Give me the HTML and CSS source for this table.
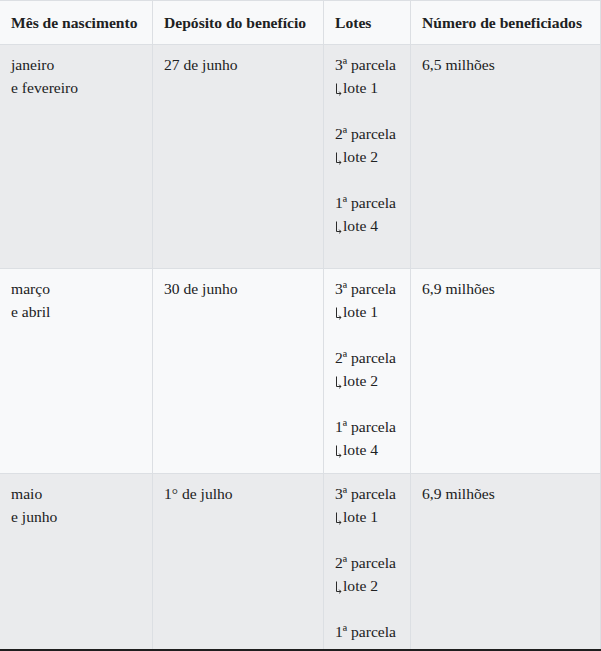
FILE: index.html
```html
<!DOCTYPE html>
<html lang="pt-BR">
<head>
<meta charset="utf-8">
<title>Calendário</title>
<link rel="stylesheet" href="styles.css">
</head>
<body>
<div class="frame">
<table class="calendar">
  <colgroup>
    <col class="c1"><col class="c2"><col class="c3"><col class="c4">
  </colgroup>
  <thead>
    <tr>
      <th>Mês de nascimento</th>
      <th>Depósito do benefício</th>
      <th>Lotes</th>
      <th>Número de beneficiados</th>
    </tr>
  </thead>
  <tbody>
    <tr class="odd">
      <td>janeiro<br>e fevereiro</td>
      <td>27 de junho</td>
      <td>3ª parcela<br><svg class="arr" viewBox="0 0 7 13" aria-hidden="true"><path d="M1.5 0.5V10.5H6M4.2 8.7L6 10.5L4.2 12.3"/></svg>lote 1<br><br>2ª parcela<br><svg class="arr" viewBox="0 0 7 13" aria-hidden="true"><path d="M1.5 0.5V10.5H6M4.2 8.7L6 10.5L4.2 12.3"/></svg>lote 2<br><br>1ª parcela<br><svg class="arr" viewBox="0 0 7 13" aria-hidden="true"><path d="M1.5 0.5V10.5H6M4.2 8.7L6 10.5L4.2 12.3"/></svg>lote 4<span class="tail"></span></td>
      <td>6,5 milhões</td>
    </tr>
    <tr class="even">
      <td>março<br>e abril</td>
      <td>30 de junho</td>
      <td>3ª parcela<br><svg class="arr" viewBox="0 0 7 13" aria-hidden="true"><path d="M1.5 0.5V10.5H6M4.2 8.7L6 10.5L4.2 12.3"/></svg>lote 1<br><br>2ª parcela<br><svg class="arr" viewBox="0 0 7 13" aria-hidden="true"><path d="M1.5 0.5V10.5H6M4.2 8.7L6 10.5L4.2 12.3"/></svg>lote 2<br><br>1ª parcela<br><svg class="arr" viewBox="0 0 7 13" aria-hidden="true"><path d="M1.5 0.5V10.5H6M4.2 8.7L6 10.5L4.2 12.3"/></svg>lote 4</td>
      <td>6,9 milhões</td>
    </tr>
    <tr class="odd">
      <td>maio<br>e junho</td>
      <td>1° de julho</td>
      <td>3ª parcela<br><svg class="arr" viewBox="0 0 7 13" aria-hidden="true"><path d="M1.5 0.5V10.5H6M4.2 8.7L6 10.5L4.2 12.3"/></svg>lote 1<br><br>2ª parcela<br><svg class="arr" viewBox="0 0 7 13" aria-hidden="true"><path d="M1.5 0.5V10.5H6M4.2 8.7L6 10.5L4.2 12.3"/></svg>lote 2<br><br>1ª parcela<br><svg class="arr" viewBox="0 0 7 13" aria-hidden="true"><path d="M1.5 0.5V10.5H6M4.2 8.7L6 10.5L4.2 12.3"/></svg>lote 4</td>
      <td>6,9 milhões</td>
    </tr>
  </tbody>
</table>
</div>
</body>
</html>
```

FILE: styles.css
```css
html, body {
  margin: 0;
  padding: 0;
  background: #ffffff;
}
.frame {
  width: 601px;
  height: 649px;
  overflow: hidden;
  border-bottom: 2px solid #1e1e1e;
}
.calendar {
  width: 601px;
  table-layout: fixed;
  border-collapse: separate;
  border-spacing: 0;
  border-top: 1px solid #dcdfe3;
  font-family: "Liberation Serif", "DejaVu Serif", serif;
  font-size: 15.6px;
  line-height: 23px;
  color: #202122;
}
.c1 { width: 153px; }
.c2 { width: 171px; }
.c3 { width: 87px; }
.c4 { width: 190px; }
.calendar th,
.calendar td {
  box-sizing: border-box;
  text-align: left;
  vertical-align: top;
  border-right: 1px solid #dcdfe3;
  border-bottom: 1px solid #dcdfe3;
  padding: 8px 11px 12px;
  white-space: nowrap;
}
.calendar th {
  font-weight: bold;
  background: #f8f9fa;
  padding: 10px 11px;
}
.odd td { background: #eaebed; }
.even td { background: #f8f9fa; }
.arr {
  width: 7px;
  height: 13px;
  margin-right: 1px;
  vertical-align: -3px;
  fill: none;
  stroke: #2a2a2a;
  stroke-width: 1;
}
.tail {
  display: block;
  height: 19px;
}
```
